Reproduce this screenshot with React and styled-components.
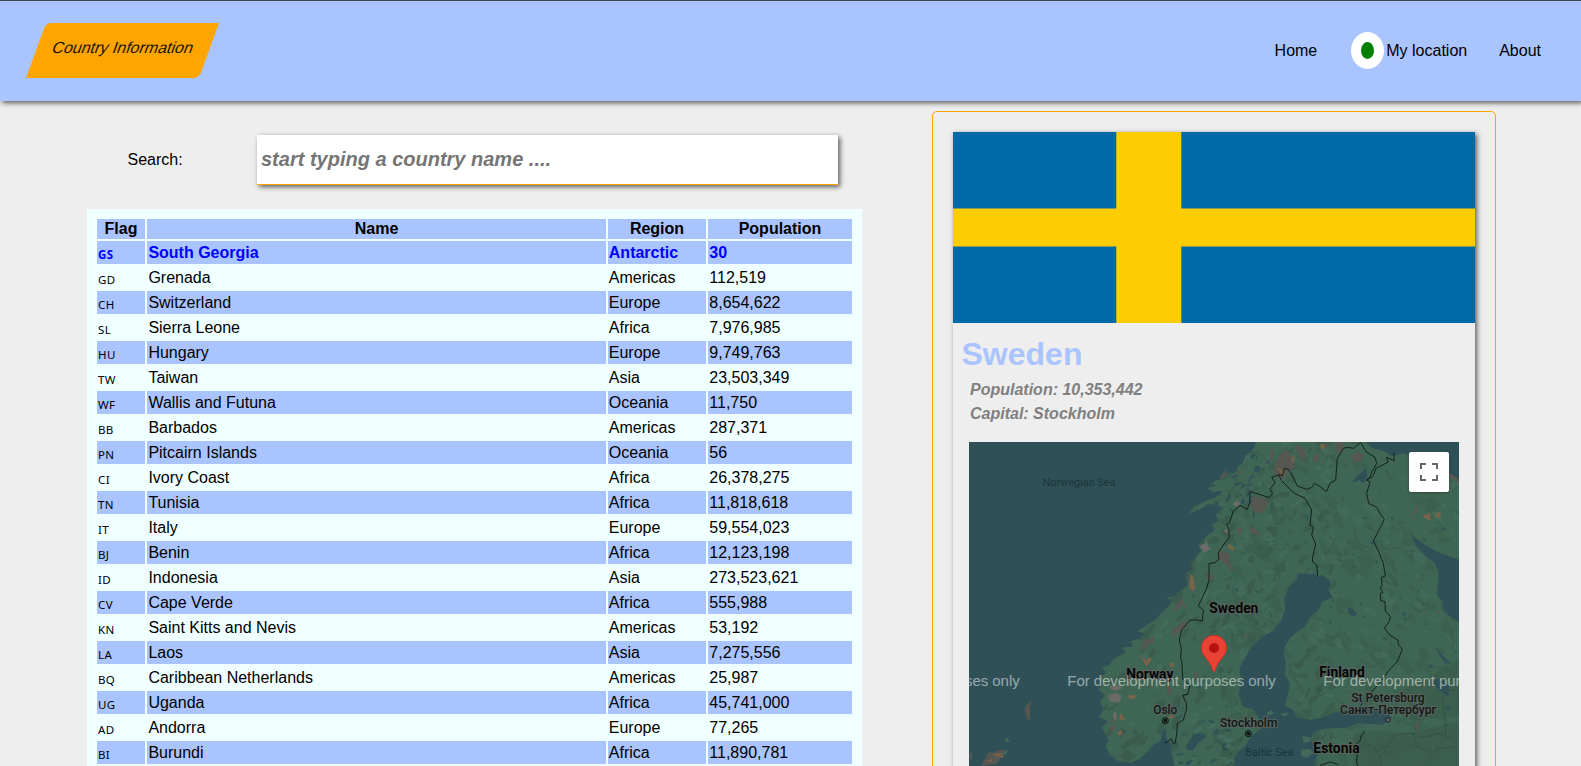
import React from "react";
import styled, { createGlobalStyle, css } from "styled-components";

const GlobalStyle = createGlobalStyle`
  * { box-sizing: border-box; }
  html, body { margin: 0; padding: 0; }
  body {
    height: 766px;
    overflow: hidden;
    background: #eeeeee;
    color: #000;
    font: 16px "Liberation Sans", Arial, sans-serif;
  }
`;

const accent = "#aac4ff";
const shadow = "2px 2px 5px rgba(0, 0, 0, 0.62)";

const Page = styled.div`
  height: 766px;
  overflow: hidden;
  display: flex;
  flex-direction: column;
`;

const Header = styled.header`
  flex: none;
  height: 101px;
  border-top: 1px solid #46464e;
  background: ${accent};
  box-shadow: ${shadow};
  display: flex;
  justify-content: space-between;
  align-items: flex-start;
  padding: 22px 40px 0 36px;
`;

const Logo = styled.h1`
  margin: 0;
  width: 173px;
  height: 55px;
  padding-top: 16px;
  padding-right: 1px;
  background: orange;
  border-radius: 5px 0;
  transform: skewX(-20deg);
  text-align: center;
  font-size: 16px;
  line-height: 18px;
  font-weight: 400;
  color: #201604;
`;

const Nav = styled.nav`
  display: flex;
  align-items: center;
  height: 55px;
`;

const NavLink = styled.a`
  display: flex;
  align-items: center;
  line-height: 18px;
  margin-left: ${(p) => p.$gap || 0}px;
`;

const StatusDot = styled.span`
  width: 33px;
  height: 37px;
  margin-right: 2px;
  border: solid #fff;
  border-width: 10px;
  border-radius: 50%;
  background: green;
`;

const Main = styled.main`
  flex: 1;
  min-height: 0;
  display: flex;
  align-items: flex-start;
  padding: 10px 85px 0 87px;
  justify-content: space-between;
`;

const ListColumn = styled.section`
  width: 775px;
  padding-top: 24px;
`;

const SearchRow = styled.label`
  display: flex;
  align-items: center;
  height: 50px;
  margin-bottom: 24px;
  padding: 0 24px 0 40.5px;
`;

const SearchLabel = styled.span`
  width: 129.5px;
`;

const SearchInput = styled.input`
  width: 581px;
  height: 50px;
  padding: 1px 4px;
  border: 0;
  border-bottom: 1px solid orange;
  background: #fff;
  box-shadow: ${shadow};
  font: italic bold 20px "Liberation Sans", Arial, sans-serif;
  &::placeholder { color: #757575; opacity: 1; }
`;

const TableWrap = styled.div`
  background: #f0ffff;
  padding: 8px;
`;

const Table = styled.table`
  width: 759px;
  table-layout: fixed;
  border-spacing: 2px;
  border-collapse: separate;
`;

const HeadCell = styled.th`
  height: 20px;
  padding: 0;
  background: ${accent};
  line-height: 18px;
  width: ${(p) => p.$width}px;
`;

const Row = styled.tr`
  ${(p) => p.$active && css`color: blue; font-weight: bold;`}
`;

const Cell = styled.td`
  height: 23px;
  padding: 0 1px 0 ${(p) => p.$inset}px;
  line-height: 21px;
  vertical-align: middle;
  background: ${(p) => (p.$striped ? accent : "#f0ffff")};
`;

const FlagCode = styled.span`
  display: block;
  height: 21px;
  padding-top: 3px;
  line-height: 20px;
  font-family: "Noto Sans", "Open Sans", sans-serif;
  font-size: 11.5px;
  letter-spacing: 0.4px;
`;

const DetailPanel = styled.aside`
  width: 564px;
  height: 900px;
  padding: 20px;
  border: 1px solid orange;
  border-radius: 5px;
`;

const Card = styled.article`
  height: 860px;
  box-shadow: ${shadow};
  background: #eeeeee;
`;

const FlagImage = styled.svg`
  display: block;
  width: 522px;
  height: 191px;
`;

const CountryName = styled.h2`
  margin: 13px 0 0 8.5px;
  font-size: 32px;
  line-height: 37px;
  color: ${accent};
`;

const Fact = styled.p`
  margin: 0 0 0 17px;
  font-size: 16px;
  line-height: 24px;
  font-style: italic;
  font-weight: bold;
  color: gray;
`;

const Facts = styled.div`
  padding-top: 5px;
  height: 69px;
`;

const MapFrame = styled.div`
  position: relative;
  width: 490px;
  height: 400px;
  margin-left: 16px;
  overflow: hidden;
  background: #2f5057;
`;

const MapArt = styled.svg`
  display: block;
  width: 490px;
  height: 324px;
`;

const FullscreenButton = styled.button`
  position: absolute;
  top: 10px;
  right: 10px;
  width: 40px;
  height: 40px;
  padding: 11px;
  border: 0;
  border-radius: 2px;
  background: #fff;
  box-shadow: 0 1px 3px rgba(0, 0, 0, 0.3);
  svg { display: block; }
`;

const countries = [
  ["GS", "South Georgia", "Antarctic", "30"],
  ["GD", "Grenada", "Americas", "112,519"],
  ["CH", "Switzerland", "Europe", "8,654,622"],
  ["SL", "Sierra Leone", "Africa", "7,976,985"],
  ["HU", "Hungary", "Europe", "9,749,763"],
  ["TW", "Taiwan", "Asia", "23,503,349"],
  ["WF", "Wallis and Futuna", "Oceania", "11,750"],
  ["BB", "Barbados", "Americas", "287,371"],
  ["PN", "Pitcairn Islands", "Oceania", "56"],
  ["CI", "Ivory Coast", "Africa", "26,378,275"],
  ["TN", "Tunisia", "Africa", "11,818,618"],
  ["IT", "Italy", "Europe", "59,554,023"],
  ["BJ", "Benin", "Africa", "12,123,198"],
  ["ID", "Indonesia", "Asia", "273,523,621"],
  ["CV", "Cape Verde", "Africa", "555,988"],
  ["KN", "Saint Kitts and Nevis", "Americas", "53,192"],
  ["LA", "Laos", "Asia", "7,275,556"],
  ["BQ", "Caribbean Netherlands", "Americas", "25,987"],
  ["UG", "Uganda", "Africa", "45,741,000"],
  ["AD", "Andorra", "Europe", "77,265"],
  ["BI", "Burundi", "Africa", "11,890,781"],
];

/* Map geometry: three units per screen pixel. */
const SEA = "#2f5057";

const mainland =
  "M890 30 L878 62 L856 76 L850 98 L832 112 L822 130 L790 128 L784 148 L762 152 L742 176 L760 186 L790 182 L764 204 L738 212 L712 226 L700 230 L688 250 L706 244 L728 232 L764 226 L790 232 L768 252 L776 272 L756 284 L764 300 L742 316 L732 328 L716 344 L724 362 L704 384 L692 400 L698 420 L682 426 L676 446 L686 462 L664 480 L640 500 L618 502 L636 512 L624 530 L604 548 L590 566 L562 584 L548 594 L530 604 L556 610 L538 626 L512 634 L518 650 L486 652 L496 668 L462 684 L450 704 L424 714 L440 728 L418 744 L434 760 L414 780 L436 796 L420 814 L430 838 L418 862 L444 874 L426 892 L436 914 L446 930 L436 948 L450 974 L476 994 L512 998 L540 986 L562 966 L578 946 L602 932 L606 904 L618 894 L620 928 L634 940 L634 966 L644 1012 L824 1012 L822 984 L838 960 L858 946 L872 920 L902 898 L920 880 L896 866 L880 838 L850 830 L836 796 L844 756 L838 716 L856 680 L874 652 L904 620 L938 604 L964 570 L976 540 L972 506 L988 468 L1010 448 L1014 430 L1064 432 L1076 442 L1088 434 L1112 452 L1108 484 L1118 502 L1086 516 L1074 542 L1052 558 L1034 592 L1010 606 L984 632 L970 662 L978 702 L974 738 L990 756 L984 796 L974 826 L1000 840 L1010 862 L1052 870 L1094 860 L1128 846 L1168 838 L1220 830 L1270 840 L1296 862 L1270 884 L1196 880 L1154 894 L1090 896 L1062 906 L1052 926 L1062 946 L1082 962 L1068 982 L1066 1012 L1500 1012 L1500 577 L1470 560 L1450 542 L1448 516 L1430 494 L1434 462 L1436 430 L1424 398 L1398 380 L1370 350 L1354 314 L1394 344 L1438 368 L1500 390 L1500 154 L1468 136 L1428 96 L1362 80 L1330 70 L1294 78 L1270 62 L1236 54 L1212 30 Z";

function seeded(seed) {
  let s = seed;
  return () => {
    s = (s * 16807) % 2147483647;
    return s / 2147483647;
  };
}

/* Ragged slivers of woodland, moorland and lake scattered over the land. */
function patches(seed, count, box, size, slant) {
  const r = seeded(seed);
  const out = [];
  for (let i = 0; i < count; i++) {
    const cx = box[0] + r() * box[2];
    const cy = box[1] + r() * box[3];
    const a = slant + (r() - 0.5) * 1.1;
    const len = size * (0.4 + r());
    const wid = len * (0.25 + r() * 0.4);
    const n = 9;
    let d = "";
    for (let k = 0; k < n; k++) {
      const t = (k / n) * Math.PI * 2;
      const q = 0.5 + r() * 0.75;
      const x = Math.cos(t) * len * q;
      const y = Math.sin(t) * wid * q;
      const px = cx + x * Math.cos(a) - y * Math.sin(a);
      const py = cy + x * Math.sin(a) + y * Math.cos(a);
      d += (k ? "L" : "M") + px.toFixed(1) + " " + py.toFixed(1);
    }
    out.push(d + "Z");
  }
  return out.join("");
}

const darkNorth = patches(71, 330, [420, 30, 700, 980], 20, -0.8);
const darkEast = patches(913, 330, [800, 30, 720, 980], 22, 0.65);
const lightNorth = patches(407, 160, [420, 30, 700, 980], 16, -0.7);
const lightEast = patches(118, 230, [780, 30, 740, 980], 17, 0.6);
const lakes = patches(5521, 105, [780, 230, 690, 740], 7, 0.7);
const fjords = patches(240, 70, [640, 60, 300, 200], 9, -0.8);
const southLakes = patches(88, 24, [650, 860, 200, 140], 9, -0.3);

const moor =
  "M880 200l24 2 20 12-6 22-18 14-24-8-6-18z M926 96l8-36 8-14-2 30-10 26z M954 82l22-24 20 20 8 34-18 12-14 22-20-4-14-20z M1008 44l26 12 4 20-12 20-14-26z M1060 76l14-6 2 22-12 8z M1120 40l34-4-4 24-20 8z M1172 80l18-16 24 10-12 20-16 2z M1084 46l18-6-4 18z M780 138l18-20-4 22-12 6z M830 124l10-12 2 20-10 4z M860 290l30 8 10 18-20-4z M830 296l16-4 2 14-12 4z M776 366l20-4 14 14-4 16 16 24-8 6-20-24-16-10z M738 432l22 6-8 16-12-4z M650 524l18-22 4 18-22 22-8-4z M638 600l20-16 22-16-4 22-30 24-12 4z M548 626l16 4 18-12v20l-18 6-16 16-10-2 12-18z M668 528l12-6-4 14z M700 726l16 4-6 24-6-18z M624 768l12 6-4 26-10-14z M456 862l8-16 6 24-12 10z M454 886l14-6-4 20-12 8z M1362 240l12-14-4 26-10 6z M1366 880l10-8-4 34-8-14z M196 830l18-20-4 20 1 36-8 4-8-24z M220 812l-6 12 4-12z M28 972l10-6-6 30z M64 1008l22-42 14 2 18-8 26 2-22 20-8 18z M850 614l12-4-8 14z M1430 540l12 6-4 8z M1446 126l50 30v-10l-44-28z";
const rock =
  "M818 222l14-12 10 12-12 10z M788 300l14-2 2 14z M716 348l20-8 4-10 6 22 8 4-24 14-2-10z M444 796l24-8 16 10-6 20-30-4z M450 768l26-4 12 10-20 8-16-4z M458 854l8-10 6 18-8 12z";
const sand =
  "M948 110l16 10 14 16-14-2-6-12z M994 84l10-6-4 22z M802 340l20 12-2 12-16-12z M690 432l8 2 4 24 4 18-8 8-10-12z M542 678l18 14 8-12 8 6-16 24z M628 700l12-2 2 10-10 6z M502 796l20-2 8 10-20 4z M480 848l14 16-6 8-10-4z M472 910l10-12 6 14-10 6z M1386 258l24-8 2 24z M1426 250l16-4v16l-14 2z M1080 44l10-4 4 14-8 6z M624 860l16-6 2 8-10 4z M82 992l14-6-2 12z M98 972l34-4-18 12z M118 980l14-6-4 10z";

const borders = [
  "M612 938L622 936L634 926L639 939L645 940L650 915L652 880L670 870L680 835L678 818L668 796L683 793L690 765L680 758L668 745L666 700L662 682L664 655L658 630L665 600L690 570L712 570L727 573L730 540L715 528L740 475L747 450L747 401L765 398L777 388L775 368L790 345L808 323L806 298L800 283L808 280L820 243L840 226L862 238L869 216L870 185L882 188L928 203L938 190L930 178L945 158L935 141L955 136L958 132L967 138L973 115L985 118L1000 143L1012 168L1040 178L1056 172L1063 160L1080 170L1100 185L1110 160L1127 150L1132 85L1150 55L1162 52L1180 55L1202 37L1218 65L1245 82L1250 100L1242 115L1235 125L1230 142L1220 150L1230 156L1220 190L1226 220L1250 232L1260 250L1273 268L1255 304L1240 332L1258 370L1270 400L1276 438L1264 442L1267 465L1260 475L1269 488L1261 490L1262 512L1275 515L1276 543L1291 560L1288 574L1273 594L1290 615L1315 632L1314 642L1327 658L1312 694L1284 724L1260 760L1230 790",
  "M1208 818L1200 830",
  "M955 133L965 152L1000 188L1035 205L1055 240L1050 285L1060 292L1055 315L1067 342L1058 380L1058 396L1070 405L1073 440",
  "M1220 150L1238 140L1248 115L1270 104L1284 96L1280 82L1302 92L1302 68",
  "M1210 902l2 6-8 8-4 16-12 12 4 20-2 34 10 26",
  "M1080 1006l32-10 24 8",
];

const regions =
  "M1190 944l20 10 12-10 32 16 28-12-10 24-12 2 4 40 M1282 948l22-32 44-8 40 14 50-12 40 20 M1400 992l30-36 60-6 M1438 914l20-4-4-48-8-60 26-24 34 10 M1280 356l40-4 14 14 26-4-8 20-22-12 M1490 590l-18 20 10 20-4 30 18 10 M1360 910l10 40 40 14";

const labels = [
  { x: 248, y: 168, w: 218, size: 34, text: "Norwegian Sea", kind: "water" },
  { x: 856, y: 977, w: 144, size: 33, text: "Baltic Sea", kind: "water" },
  { x: 748, y: 549, w: 147, size: 42, text: "Sweden", kind: "country" },
  { x: 499, y: 747, w: 141, size: 42, text: "Norway", kind: "country" },
  { x: 1078, y: 741, w: 136, size: 42, text: "Finland", kind: "country" },
  { x: 1060, y: 969, w: 139, size: 42, text: "Estonia", kind: "country" },
  { x: 580, y: 853, w: 72, size: 36, text: "Oslo", kind: "city" },
  { x: 780, y: 891, w: 172, size: 36, text: "Stockholm", kind: "city" },
  { x: 1174, y: 816, w: 220, size: 36, text: "St Petersburg", kind: "city" },
  { x: 1140, y: 852, w: 290, size: 36, text: "Санкт-Петербург", kind: "city" },
];

const MapLabel = styled.text`
  font-family: Roboto, "Liberation Sans", sans-serif;
  font-weight: ${(p) => ({ country: 700, city: 500, water: 400 })[p.$kind]};
  fill: ${(p) => (p.$kind === "water" ? "#1b353b" : p.$kind === "city" ? "#141817" : "#050606")};
  ${(p) =>
    p.$kind !== "water" &&
    css`
      paint-order: stroke;
      stroke: #59635f;
      stroke-width: 7px;
      stroke-linejoin: round;
      stroke-opacity: 0.85;
    `}
`;

const Watermark = styled.text`
  font-family: "Liberation Sans", Arial, sans-serif;
  font-size: 45px;
  fill: rgba(255, 255, 255, 0.5);
`;

function CountryMap() {
  return (
    <MapArt viewBox="27 36 1470 972" role="img">
      <defs>
        <clipPath id="land">
          <path d={mainland} />
        </clipPath>
      </defs>
      <rect x="27" y="36" width="1470" height="972" fill={SEA} />
      <path d={mainland} fill="#3f6654" />
      <g clipPath="url(#land)">
        <path d={darkNorth} fill="#3a5b4d" />
        <path d={darkEast} fill="#3c604f" />
        <path d={lightNorth} fill="#426b5b" />
        <path d={lightEast} fill="#42695a" />
        <path d="M1180 910l60-10 110 10 160-40v150h-330z M1330 780l170-90v170l-140 10z" fill="#3b5a4c" opacity=".65" />
        <path d={lakes} fill="#315552" />
        <path d={fjords} fill={SEA} />
        <path d={southLakes} fill={SEA} />
        <path d="M680 944l20-28 22-10 6 22-16 14-14 20-18-4z M1178 152l24-22 16-16 4 24-12 22-12-10-16 8z M1412 756l26-12 30 26-4 30-22-16z M1164 532l12 4 16 14-10 10-18-10z M1430 650l14 22 30 30-18-2-20-26z" fill="#2f5057" />
      </g>
      <path d={moor} fill="#575752" />
      <path d={rock} fill="#6a6b69" />
      <path d={sand} fill="#796449" />
      <path d="M134 926l8-4 2 8 8 4-14 2z M124 968l20-6-6 10z M1028 918l22 4 2 14-22 2z M1022 960l26-4 14 12-22 16-16-6z M920 848l14-8 8 10-16 8z M958 852l28-4-10 12z" fill="#42695a" />
      <g fill="none" stroke="#14201d" strokeWidth="3" strokeLinejoin="round">
        {borders.map((d) => (
          <path key={d} d={d} />
        ))}
        <path d={regions} strokeWidth="2" strokeDasharray="3 5" opacity=".75" />
      </g>
      {labels.map((l) => (
        <MapLabel key={l.text} $kind={l.kind} x={l.x} y={l.y} fontSize={l.size} textLength={l.w} lengthAdjust="spacingAndGlyphs">
          {l.text}
        </MapLabel>
      ))}
      <g fill="none" stroke="#080b0a" strokeWidth="3">
        <circle cx="616" cy="872" r="9" />
        <circle cx="616" cy="872" r="4" fill="#080b0a" />
        <circle cx="865" cy="911" r="9" />
        <circle cx="865" cy="911" r="4" fill="#080b0a" />
        <circle cx="1284" cy="870" r="7" fill="#59635f" stroke="#1b2120" />
      </g>
      <path
        d="M762 725c-3 0-4-3-5-8-4-14-10-21-18-31-9-11-15-19-15-32a38 38 0 0 1 76 0c0 13-6 21-15 32-8 10-14 17-18 31-1 5-2 8-5 8z"
        fill="#ea4335"
        stroke="#c5221f"
        strokeWidth="2"
      />
      <circle cx="762" cy="654" r="15" fill="#b31412" />
      {[-446, 322, 1090].map((x) => (
        <Watermark key={x} x={x} y="769" textLength="625">
          For development purposes only
        </Watermark>
      ))}
    </MapArt>
  );
}

function SwedishFlag() {
  return (
    <FlagImage viewBox="0 0 522 191" role="img">
      <rect width="522" height="191" fill="#006aa7" />
      <path d="M163.3 0h65v191h-65z M0 76.4h522v38.2h-522z" fill="#fecc02" />
    </FlagImage>
  );
}

export default function App() {
  return (
    <>
      <GlobalStyle />
      <Page>
        <Header>
          <Logo>Country Information</Logo>
          <Nav>
            <NavLink>Home</NavLink>
            <NavLink $gap={34}>
              <StatusDot />
              My location
            </NavLink>
            <NavLink $gap={32}>About</NavLink>
          </Nav>
        </Header>
        <Main>
          <ListColumn>
            <SearchRow>
              <SearchLabel>Search:</SearchLabel>
              <SearchInput placeholder="start typing a country name ...." />
            </SearchRow>
            <TableWrap>
              <Table>
                <thead>
                  <tr>
                    <HeadCell $width={48}>Flag</HeadCell>
                    <HeadCell $width={459}>Name</HeadCell>
                    <HeadCell $width={98}>Region</HeadCell>
                    <HeadCell $width={144}>Population</HeadCell>
                  </tr>
                </thead>
                <tbody>
                  {countries.map(([code, name, region, population], i) => {
                    const striped = i % 2 === 0;
                    return (
                      <Row key={code} $active={i === 0}>
                        <Cell $striped={striped} $inset={1}>
                          <FlagCode>{code}</FlagCode>
                        </Cell>
                        <Cell $striped={striped} $inset={1.4}>{name}</Cell>
                        <Cell $striped={striped} $inset={0.8}>{region}</Cell>
                        <Cell $striped={striped} $inset={1.3}>{population}</Cell>
                      </Row>
                    );
                  })}
                </tbody>
              </Table>
            </TableWrap>
          </ListColumn>
          <DetailPanel>
            <Card>
              <SwedishFlag />
              <CountryName>Sweden</CountryName>
              <Facts>
                <Fact>Population: 10,353,442</Fact>
                <Fact>Capital: Stockholm</Fact>
              </Facts>
              <MapFrame>
                <CountryMap />
                <FullscreenButton aria-label="Toggle fullscreen">
                  <svg width="18" height="18" viewBox="0 0 18 18" fill="#666">
                    <path d="M0 0v6h2V2h4V0H0zm16 0h-4v2h4v4h2V0h-2zm0 16h-4v2h6v-6h-2v4zM2 12H0v6h6v-2H2v-4z" />
                  </svg>
                </FullscreenButton>
              </MapFrame>
            </Card>
          </DetailPanel>
        </Main>
      </Page>
    </>
  );
}
